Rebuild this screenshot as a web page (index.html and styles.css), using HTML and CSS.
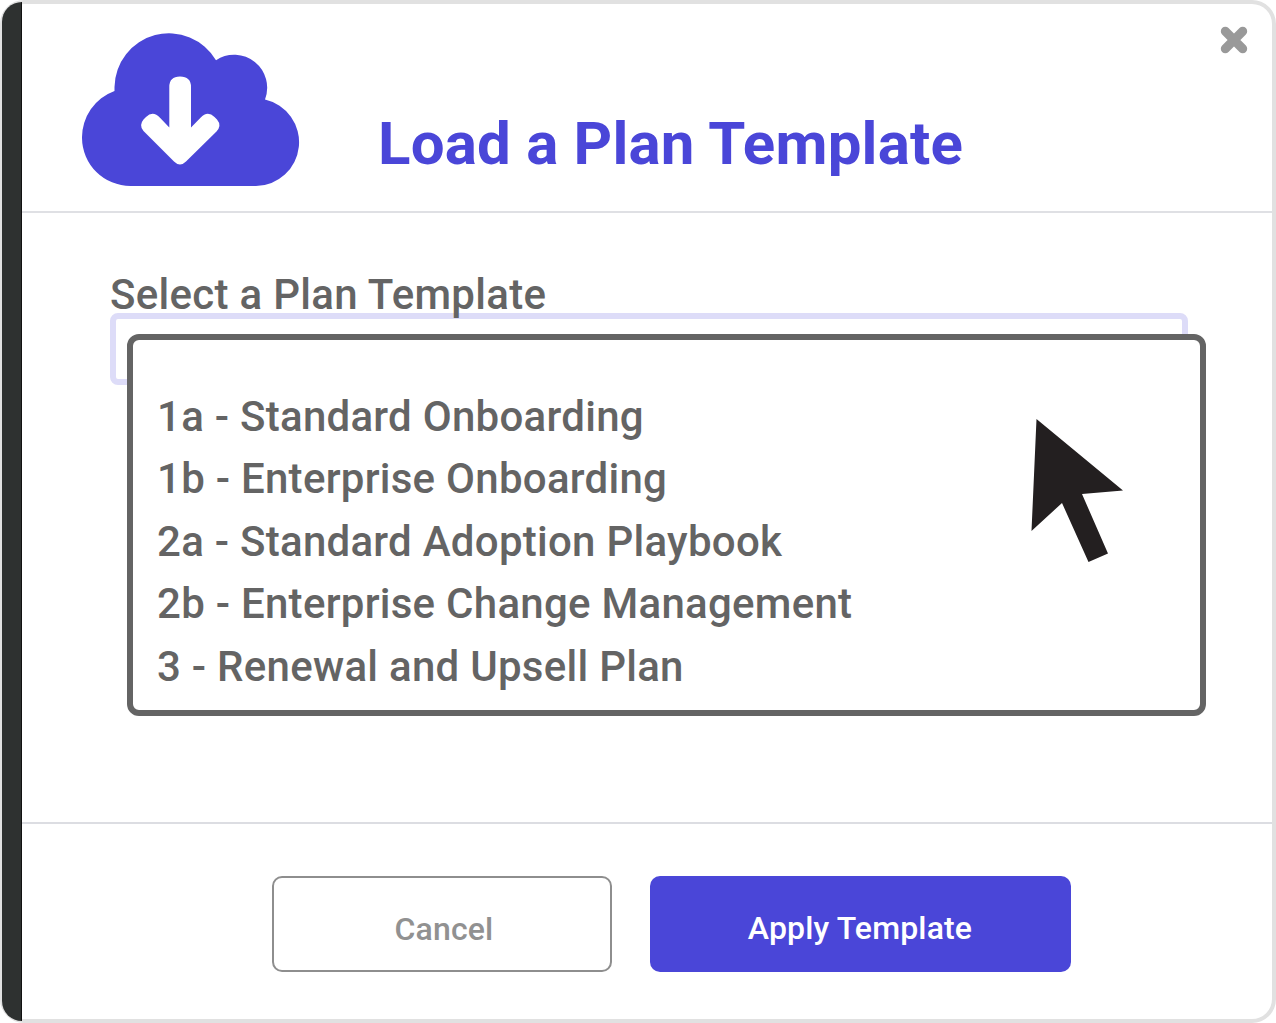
FILE: index.html
```html
<!DOCTYPE html>
<html lang="en">
<head>
  <meta charset="UTF-8">
  <meta name="viewport" content="width=device-width, initial-scale=1.0">
  <title>Load a Plan Template</title>
  <link rel="stylesheet" href="styles.css">
</head>
<body>

  <div class="modal">
    <div class="modal-stripe"></div>

    <div class="modal-content">
      <header class="modal-header">
        <svg class="cloud-icon" width="218" height="154" viewBox="0 0 218 154">
          <path fill="#4a46d8" d="M48.500 153 A48.500 48.500 0 0 1 0 105 A49.500 49.500 0 0 1 32.500 58 V54 A54.500 54.500 0 0 1 134 27.200 A33 33 0 0 1 183 66.500 A43.800 43.800 0 0 1 174 153 Z"/>
          <path fill="#fff" d="M87.300 54 Q87.300 43.500 98 43.500 Q109 43.500 109 54 V94.500 L118.500 84.800 Q125.500 77 132.500 84 L135 86.500 Q140 92.500 134.500 98.500 L104 128.500 Q98 134.500 92 128.500 L61.500 98 Q56.500 92.500 61.500 86.500 L64 84 Q71 77 78 84.800 L87.300 94.500 Z"/>
        </svg>
        <h1 class="modal-title">Load a Plan Template</h1>
        <button class="close-button" aria-label="Close">
          <svg width="28" height="28" viewBox="0 0 28 28">
            <path d="M5.300 5.300 L22.700 22.700 M22.700 5.300 L5.300 22.700" stroke="#999" stroke-width="9" stroke-linecap="round"/>
          </svg>
        </button>
      </header>

      <main class="modal-body">
        <label class="field-label">Select a Plan Template</label>
        <div class="select-box">
          <ul class="dropdown">
            <li class="option">1a - Standard Onboarding</li>
            <li class="option">1b - Enterprise Onboarding</li>
            <li class="option">2a - Standard Adoption Playbook</li>
            <li class="option">2b - Enterprise Change Management</li>
            <li class="option">3 - Renewal and Upsell Plan</li>
          </ul>
        </div>
      </main>

      <footer class="modal-footer">
        <button class="button button-cancel">Cancel</button>
        <button class="button button-apply">Apply Template</button>
      </footer>
    </div>

    <svg class="cursor" width="92" height="144" viewBox="0 0 92 144">
      <path fill="#231f20" d="M5.500 0 L92 71.500 L51 75 L77 134.500 L57.500 143 L31 84 L0.500 112 Z"/>
    </svg>
  </div>

</body>
</html>
```

FILE: styles.css
```css
* {
  box-sizing: border-box;
}

body {
  margin: 0;
  font-family: Roboto, sans-serif;
  background-color: #fff;
  color: #646464;
}

.modal {
  position: relative;
  display: flex;
  width: 1276px;
  height: 1023px;
  border: 4px solid #e1e1e1;
  border-left-width: 2px;
  border-radius: 24px;
}

/* Dark edge of the page behind, runs over the border */
.modal-stripe {
  width: 20px;
  margin: -2px 0;
  background-color: #2e3130;
  border-right: 1px solid #111;
  border-radius: 20px 0 0 20px;
}

.modal-content {
  flex: 1;
  display: flex;
  flex-direction: column;
}

.modal-header {
  display: flex;
  height: 209px;
  padding: 29px 24px 0 60px;
  border-bottom: 2px solid #dfe0e4;
}

.cloud-icon {
  flex: none;
}

.modal-title {
  margin: 76px 0 0 78px;
  font-size: 60px;
  font-weight: 700;
  line-height: 70px;
  letter-spacing: 0.2px;
  white-space: nowrap;
  color: #4a46d8;
}

.close-button {
  width: 28px;
  height: 28px;
  margin: -7px 0 0 auto;
  padding: 0;
  border: 0;
  background: none;
}

.close-button svg {
  display: block;
}

.modal-body {
  height: 611px;
  padding: 57px 84px 0 88px;
  border-bottom: 2px solid #dcdde2;
}

/* Descenders stay above the select border */
.field-label {
  position: relative;
  z-index: 1;
  display: block;
  height: 43px;
  font-size: 42px;
  font-weight: 500;
  line-height: 49px;
  letter-spacing: 0.3px;
}

.select-box {
  position: relative;
  width: 1078px;
  height: 72px;
  border: 6px solid #dddcf8;
  border-radius: 8px;
}

.dropdown {
  position: absolute;
  top: 15px;
  left: 11px;
  width: 1079px;
  height: 382px;
  margin: 0;
  padding: 45.500px 24px 0;
  list-style: none;
  background-color: #fff;
  border: 6px solid #646464;
  border-radius: 12px;
}

.option {
  font-size: 42px;
  font-weight: 500;
  line-height: 62.6px;
  letter-spacing: 0.27px;
  white-space: nowrap;
}

.modal-footer {
  display: flex;
  gap: 38px;
  padding: 52px 0 0 250px;
}

.button {
  height: 96px;
  padding: 0;
  font-family: inherit;
  font-size: 32px;
  font-weight: 500;
  letter-spacing: 0.15px;
  border-radius: 10px;
}

.button-cancel {
  width: 340px;
  padding: 10px 0 0 4px;
  background-color: #fff;
  border: 2px solid #8e8e8e;
  color: #919191;
}

.button-apply {
  width: 421px;
  padding: 7px 1px 0 0;
  background-color: #4a46d8;
  border: 0;
  color: #fff;
}

.cursor {
  position: absolute;
  top: 415px;
  left: 1029px;
}
```
